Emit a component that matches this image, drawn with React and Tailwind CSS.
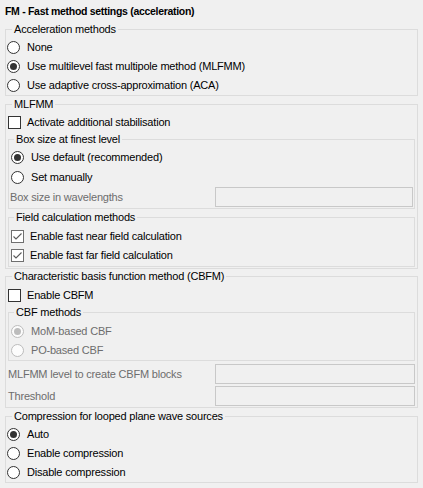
import React from 'react'

const font = { fontFamily: '"Liberation Sans", Arial, sans-serif' }

function Radio({ label, checked, disabled, className = '' }) {
  return (
    <div className={`flex items-center h-[19px] gap-[7px] ${className}`}>
      <span
        className={`w-[13px] h-[13px] rounded-full border flex items-center justify-center shrink-0 ${
          disabled ? 'border-[#bcbcbc] bg-[#fcfcfc]' : 'border-[#333333] bg-white'
        }`}
      >
        {checked && (
          <span className={`w-[7px] h-[7px] rounded-full ${disabled ? 'bg-[#bcbcbc]' : 'bg-[#333333]'}`} />
        )}
      </span>
      <span className={disabled ? 'text-[#6d6d6d]' : 'text-black'}>{label}</span>
    </div>
  )
}

function Check({ label, checked, className = '' }) {
  return (
    <div className={`flex items-center h-[19px] gap-[6px] ${className}`}>
      <span
        className={`w-[13px] h-[13px] border bg-white flex items-center justify-center shrink-0 ${
          checked ? 'border-[#6f6f6f]' : 'border-[#333333]'
        }`}
      >
        {checked && (
          <svg width="11" height="11" viewBox="0 0 11 11">
            <path d="M1.5 5.5 L4 8 L9.5 2.5" fill="none" stroke="#5a5a5a" strokeWidth="1.1" />
          </svg>
        )}
      </span>
      <span>{label}</span>
    </div>
  )
}

function Field({ label, className = '' }) {
  return (
    <div className={`flex items-center h-[20px] ${className}`}>
      <span className="flex-1 text-[#6d6d6d]">{label}</span>
      <span className="w-[200px] h-[20px] border border-[#c8c8c8] bg-[#f0f0f0]" />
    </div>
  )
}

function Group({ title, inner, className = '', children }) {
  return (
    <fieldset
      className={`border border-[#dcdcdc] ${inner ? 'pl-[2px] pr-[1px]' : 'px-[2px]'} ${className}`}
    >
      <legend className={`leading-[14px] px-[2px] ${inner ? 'ml-[3px]' : 'ml-[4px]'}`}>{title}</legend>
      {children}
    </fieldset>
  )
}

export default function App() {
  return (
    <div
      className="w-[423px] h-[488px] bg-[#f0f0f0] px-[5px] pt-[4px] text-[11px] tracking-[-0.2px] text-black"
      style={font}
    >
      <div className="font-bold leading-[14px] text-[10.5px] tracking-[-0.3px]">
        FM - Fast method settings (acceleration)
      </div>

      {/* Acceleration methods */}
      <Group title="Acceleration methods" className="mt-[4px] pt-[2px]">
        <Radio label="None" className="-ml-px" />
        <Radio label="Use multilevel fast multipole method (MLFMM)" checked className="-ml-px" />
        <Radio label="Use adaptive cross-approximation (ACA)" className="-ml-px" />
      </Group>

      {/* MLFMM */}
      <Group title="MLFMM" className="mt-[1px] pt-[2px] pb-[1px]">
        <Check label="Activate additional stabilisation" />
        <Group title="Box size at finest level" inner className="pt-[1px] pb-[1px]">
          <Radio label="Use default (recommended)" checked className="h-[20px]" />
          <Radio label="Set manually" className="h-[20px]" />
          <div className="flex items-center h-[20px] -ml-px">
            <span className="flex-1 text-[#6d6d6d]">Box size in wavelengths</span>
            <span className="w-[198px] h-[20px] border border-[#c8c8c8] bg-[#f0f0f0]" />
          </div>
        </Group>
        <Group title="Field calculation methods" inner className="mt-[1px] pt-[3px] pb-[1px]">
          <Check label="Enable fast near field calculation" checked />
          <Check label="Enable fast far field calculation" checked />
        </Group>
      </Group>

      {/* CBFM */}
      <Group title="Characteristic basis function method (CBFM)" className="pt-[3px] pb-[1px]">
        <Check label="Enable CBFM" className="h-[16px]" />
        <Group title="CBF methods" inner className="pt-[3px]">
          <Radio label="MoM-based CBF" checked disabled />
          <Radio label="PO-based CBF" disabled />
        </Group>
        <Field label="MLFMM level to create CBFM blocks" className="mt-[3px]" />
        <Field label="Threshold" className="mt-[2px]" />
      </Group>

      {/* Compression */}
      <Group title="Compression for looped plane wave sources" className="mt-[1px] pt-[2px]">
        <Radio label="Auto" checked className="-ml-px" />
        <Radio label="Enable compression" className="-ml-px" />
        <Radio label="Disable compression" className="-ml-px" />
      </Group>
    </div>
  )
}
